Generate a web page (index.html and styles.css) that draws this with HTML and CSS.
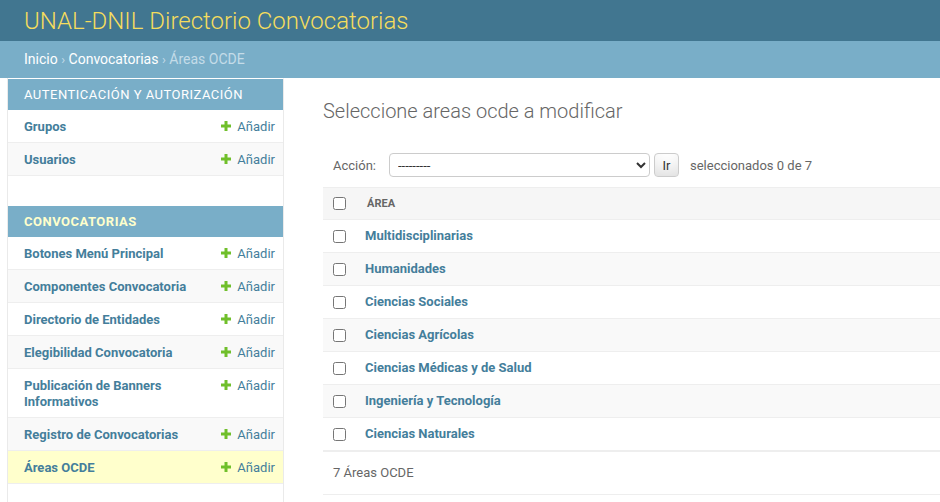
FILE: index.html
```html
<!DOCTYPE html>
<html lang="es">
<head>
<meta charset="utf-8">
<title>Seleccione areas ocde a modificar</title>
<link rel="stylesheet" href="styles.css">
</head>
<body>
<header class="header">
  <div class="branding"><a class="site-name" href="#">UNAL-DNIL Directorio Convocatorias</a></div>
</header>
<nav class="breadcrumbs">
  <a href="#">Inicio</a> <span class="sep">›</span> <a href="#">Convocatorias</a> <span class="sep">›</span> Áreas OCDE
</nav>
<div class="main">
  <div class="toggle"></div>
  <aside class="sidebar">
    <table class="module">
      <caption>Autenticación y autorización</caption>
      <tr class="row1"><th><a href="#">Grupos</a></th><td><a class="addlink" href="#"><svg class="plus" viewBox="0 0 10 10"><rect x="3.5" y="0" width="3" height="10"/><rect x="0" y="3.5" width="10" height="3"/></svg>Añadir</a></td></tr>
      <tr class="row2"><th><a href="#">Usuarios</a></th><td><a class="addlink" href="#"><svg class="plus" viewBox="0 0 10 10"><rect x="3.5" y="0" width="3" height="10"/><rect x="0" y="3.5" width="10" height="3"/></svg>Añadir</a></td></tr>
    </table>
    <table class="module current-app">
      <caption>Convocatorias</caption>
      <tr class="row1"><th><a href="#">Botones Menú Principal</a></th><td><a class="addlink" href="#"><svg class="plus" viewBox="0 0 10 10"><rect x="3.5" y="0" width="3" height="10"/><rect x="0" y="3.5" width="10" height="3"/></svg>Añadir</a></td></tr>
      <tr class="row2"><th><a href="#">Componentes Convocatoria</a></th><td><a class="addlink" href="#"><svg class="plus" viewBox="0 0 10 10"><rect x="3.5" y="0" width="3" height="10"/><rect x="0" y="3.5" width="10" height="3"/></svg>Añadir</a></td></tr>
      <tr class="row1"><th><a href="#">Directorio de Entidades</a></th><td><a class="addlink" href="#"><svg class="plus" viewBox="0 0 10 10"><rect x="3.5" y="0" width="3" height="10"/><rect x="0" y="3.5" width="10" height="3"/></svg>Añadir</a></td></tr>
      <tr class="row2"><th><a href="#">Elegibilidad Convocatoria</a></th><td><a class="addlink" href="#"><svg class="plus" viewBox="0 0 10 10"><rect x="3.5" y="0" width="3" height="10"/><rect x="0" y="3.5" width="10" height="3"/></svg>Añadir</a></td></tr>
      <tr class="row1"><th><a href="#">Publicación de Banners Informativos</a></th><td><a class="addlink" href="#"><svg class="plus" viewBox="0 0 10 10"><rect x="3.5" y="0" width="3" height="10"/><rect x="0" y="3.5" width="10" height="3"/></svg>Añadir</a></td></tr>
      <tr class="row2"><th><a href="#">Registro de Convocatorias</a></th><td><a class="addlink" href="#"><svg class="plus" viewBox="0 0 10 10"><rect x="3.5" y="0" width="3" height="10"/><rect x="0" y="3.5" width="10" height="3"/></svg>Añadir</a></td></tr>
      <tr class="current-model"><th><a href="#">Áreas OCDE</a></th><td><a class="addlink" href="#"><svg class="plus" viewBox="0 0 10 10"><rect x="3.5" y="0" width="3" height="10"/><rect x="0" y="3.5" width="10" height="3"/></svg>Añadir</a></td></tr>
    </table>
  </aside>
  <main class="content">
    <h1>Seleccione areas ocde a modificar</h1>
    <div class="actions">
      <label class="action-label">Acción:</label>
      <select class="action-select"><option>---------</option></select>
      <button class="go-button" type="button">Ir</button>
      <span class="action-counter">seleccionados 0 de 7</span>
    </div>
    <table class="results">
      <thead>
        <tr><th class="check-col"><input type="checkbox"></th><th class="col-area">Área</th></tr>
      </thead>
      <tbody>
        <tr class="row1"><td class="check-col"><input type="checkbox"></td><th><a href="#">Multidisciplinarias</a></th></tr>
        <tr class="row2"><td class="check-col"><input type="checkbox"></td><th><a href="#">Humanidades</a></th></tr>
        <tr class="row1"><td class="check-col"><input type="checkbox"></td><th><a href="#">Ciencias Sociales</a></th></tr>
        <tr class="row2"><td class="check-col"><input type="checkbox"></td><th><a href="#">Ciencias Agrícolas</a></th></tr>
        <tr class="row1"><td class="check-col"><input type="checkbox"></td><th><a href="#">Ciencias Médicas y de Salud</a></th></tr>
        <tr class="row2"><td class="check-col"><input type="checkbox"></td><th><a href="#">Ingeniería y Tecnología</a></th></tr>
        <tr class="row1"><td class="check-col"><input type="checkbox"></td><th><a href="#">Ciencias Naturales</a></th></tr>
      </tbody>
    </table>
    <p class="paginator">7 Áreas OCDE</p>
  </main>
</div>
</body>
</html>
```
FILE: styles.css
```css
* { box-sizing: border-box; }
html, body { margin: 0; padding: 0; }
body {
  font-family: Roboto, "Liberation Sans", sans-serif;
  font-size: 14px;
  color: #333;
  background: #fff;
  overflow: hidden;
}
a { text-decoration: none; color: #447e9b; }

.header {
  height: 41px;
  background: #417690;
  padding: 0 24px;
  display: flex;
  align-items: center;
}
.site-name {
  font-size: 24px;
  font-weight: 300;
  color: #f5dd5d;
  line-height: 28px;
}

.breadcrumbs {
  background: #79aec8;
  padding: 10px 24px;
  font-size: 14px;
  line-height: 17px;
  color: #c4dce8;
}
.breadcrumbs a { color: #fff; }
.breadcrumbs .sep { font-size: 13px; }

.main {
  display: flex;
  min-height: calc(100vh - 78px);
}
.toggle {
  flex: 0 0 8px;
  border-right: 1px solid #eaeaea;
}
.sidebar {
  flex: 0 0 276px;
  border-right: 1px solid #eaeaea;
  border-top: 1px solid transparent;
}
.module {
  width: 100%;
  border-collapse: collapse;
  margin-bottom: 30px;
}
.module caption {
  text-align: left;
  background: #79aec8;
  color: #fff;
  font-size: 13px;
  line-height: 15px;
  font-weight: 400;
  letter-spacing: 0.5px;
  text-transform: uppercase;
  padding: 8px 8px 8px 16px;
}
.current-app caption {
  color: #ffc;
  font-weight: 700;
}
.module th, .module td {
  font-size: 13px;
  line-height: 16px;
  padding: 9px 8px 7px;
  border-bottom: 1px solid #eee;
  vertical-align: top;
}
.module th {
  text-align: left;
  padding-left: 16px;
  font-weight: 700;
}
.module td {
  text-align: right;
  white-space: nowrap;
  width: 70px;
}
.row1 { background: #fff; }
.row2 { background: #f9f9f9; }
.current-model { background: #ffc; }
.addlink {
  display: inline-flex;
  align-items: center;
  gap: 6px;
  font-weight: 400;
}
.plus {
  width: 10px;
  height: 10px;
  fill: #70bf2b;
  margin-top: -2px;
}

.content {
  flex: 1;
  padding: 20px 0 0 39px;
  min-width: 0;
}
.content h1 {
  margin: 1px 0 20px;
  font-size: 20px;
  line-height: 24px;
  font-weight: 300;
  color: #666;
}
.actions {
  display: flex;
  align-items: center;
  padding: 10px;
  height: 44px;
  font-size: 13px;
  color: #666;
}
.action-select {
  margin-left: 13px;
  width: 261px;
  height: 24px;
  border: 1px solid #ccc;
  border-radius: 4px;
  background: #fff;
  font-family: Roboto, "Liberation Sans", sans-serif;
  font-size: 13px;
  color: #333;
  padding: 0 4px;
}
.go-button {
  margin-left: 4px;
  height: 24px;
  width: 25px;
  padding: 0;
  border: 1px solid #ccc;
  border-radius: 4px;
  background: #fff;
  box-shadow: 0 -15px 20px -10px rgba(0, 0, 0, 0.15) inset;
  font-family: Roboto, "Liberation Sans", sans-serif;
  font-size: 13px;
  color: #333;
}
.action-counter { margin-left: 11px; }

.results {
  width: 100%;
  border-collapse: collapse;
}
.results thead th {
  background: #f6f6f6;
  border-top: 1px solid #eee;
  border-bottom: 1px solid #eee;
  height: 32px;
  padding: 0;
  text-align: left;
  font-size: 11px;
  font-weight: 700;
  text-transform: uppercase;
  color: #666;
  vertical-align: middle;
}
.results thead th.col-area { padding-left: 10px; }
.results td, .results tbody th {
  border-bottom: 1px solid #eee;
  height: 33px;
  padding: 0 8px;
  font-size: 13px;
  line-height: 16px;
  text-align: left;
  vertical-align: middle;
}
.results tbody th { font-weight: 700; }
.results .check-col {
  width: 34px;
  padding: 0 0 0 10px;
}
.results input[type=checkbox] {
  margin: 0;
  width: 13px;
  height: 13px;
  display: block;
}
.paginator {
  margin: 0;
  border-top: 1px solid #eee;
  border-bottom: 1px solid #eee;
  padding: 10px;
  line-height: 22px;
  font-size: 13px;
  color: #666;
}
```
